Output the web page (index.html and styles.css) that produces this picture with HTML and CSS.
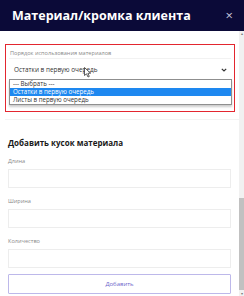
FILE: index.html
```html
<!DOCTYPE html>
<html lang="ru">
<head>
    <meta charset="UTF-8">
    <meta name="viewport" content="width=device-width, initial-scale=1.0">
    <title>Материал/кромка клиента</title>
    <link rel="stylesheet" href="styles.css">
</head>
<body>
    <div class="modal">
        <div class="modal-header">
            <span class="modal-title">Материал/кромка клиента</span>
            <span class="modal-close">&times;</span>
        </div>

        <div class="modal-body">
            <div class="modal-content">
                <div class="order-box">
                    <div class="field-label">Порядок использования материалов</div>
                    <div class="select">
                        <span>Остатки в первую очередь</span>
                        <svg class="chevron" width="6" height="4" viewBox="0 0 6 4">
                            <path d="M0.8 0.8 L3 3 L5.2 0.8" fill="none" stroke="#333" stroke-width="1.2"/>
                        </svg>
                        <svg class="cursor" width="8" height="11" viewBox="0 0 8 11">
                            <path d="M0.5 0.5 L0.5 8.5 L2.5 6.8 L4 10 L5.3 9.4 L3.9 6.3 L6.5 6.2 Z" fill="#fff" stroke="#333" stroke-width="0.8"/>
                        </svg>
                        <div class="options">
                            <div class="option">--- Выбрать ---</div>
                            <div class="option selected">Остатки в первую очередь</div>
                            <div class="option">Листы в первую очередь</div>
                        </div>
                    </div>
                </div>

                <div class="divider"></div>

                <h3 class="section-title">Добавить кусок материала</h3>

                <div class="field-label">Длина</div>
                <div class="input"></div>

                <div class="field-label">Ширина</div>
                <div class="input"></div>

                <div class="field-label">Количество</div>
                <div class="input"></div>

                <button class="add-button">Добавить</button>
            </div>

            <div class="scrollbar">
                <div class="scroll-arrow">&#9652;</div>
                <div class="scroll-track">
                    <div class="scroll-thumb"></div>
                </div>
                <div class="scroll-arrow">&#9662;</div>
            </div>
        </div>
    </div>
</body>
</html>
```

FILE: styles.css
```css
* {
    margin: 0;
    padding: 0;
    box-sizing: border-box;
}

body {
    font-family: "Open Sans", Arial, sans-serif;
    background: #fff;
    width: 244px;
    height: 296px;
    overflow: hidden;
}

.modal {
    display: flex;
    flex-direction: column;
    height: 296px;
}

.modal-header {
    height: 31px;
    background: #0b0a38;
    color: #fff;
    display: flex;
    align-items: center;
    justify-content: space-between;
    padding: 0 11px 0 12px;
}

.modal-title {
    font-size: 12.5px;
    font-weight: bold;
}

.modal-close {
    font-size: 13px;
    color: #c8c8dc;
    line-height: 1;
}

.modal-body {
    flex: 1;
    display: flex;
}

.modal-content {
    flex: 1;
    padding: 13px 4px 0 5px;
}

.order-box {
    border: 1px solid #e3262f;
    height: 68px;
    padding: 4px 3px 0 3px;
}

.field-label {
    font-size: 5.6px;
    color: #8a8a8a;
    line-height: 8px;
    margin-left: 1px;
}

.select {
    position: relative;
    height: 21px;
    margin-top: 1px;
    border-top: 1px solid #f2f2f2;
    display: flex;
    align-items: center;
    justify-content: space-between;
    padding: 0 4px 0 5px;
    font-size: 6.4px;
    color: #333;
}

.chevron {
    margin-top: 1px;
}

.cursor {
    position: absolute;
    left: 75px;
    top: 8px;
}

.options {
    position: absolute;
    left: 0;
    right: -1px;
    top: 20px;
    background: #fff;
    border: 1px solid #8f8f8f;
    box-shadow: 0 2px 2px rgba(0, 0, 0, 0.2);
}

.option {
    height: 8px;
    line-height: 8px;
    padding-left: 3px;
    font-size: 6.2px;
    color: #333;
}

.option.selected {
    background: #1e88f0;
    color: #fff;
}

.divider {
    height: 1px;
    background: #f3f3f3;
    margin: 7px -4px 0 0;
}

.section-title {
    font-size: 8px;
    font-weight: bold;
    color: #1a1a1a;
    margin: 18px 0 0 3px;
    line-height: 10px;
}

.section-title + .field-label {
    margin-top: 9px;
}

.modal-content > .field-label {
    margin-left: 3px;
}

.input {
    height: 19px;
    border: 1px solid #ededed;
    margin: 4px 4px 9px 3px;
}

.add-button {
    display: block;
    width: 223px;
    height: 20px;
    margin: -3px 0 0 3px;
    background: #fff;
    border: 1px solid #bdb8ea;
    color: #6e69cc;
    font-family: "Open Sans", Arial, sans-serif;
    font-size: 6px;
    border-radius: 1px;
}

.scrollbar {
    width: 5px;
    background: #f1f1f1;
    display: flex;
    flex-direction: column;
}

.scroll-arrow {
    height: 5px;
    font-size: 4px;
    line-height: 5px;
    text-align: center;
    color: #777;
}

.scroll-track {
    flex: 1;
    display: flex;
    flex-direction: column;
    justify-content: flex-end;
}

.scroll-thumb {
    height: 92px;
    background: #c1c1c1;
    margin-bottom: 1px;
}
```
